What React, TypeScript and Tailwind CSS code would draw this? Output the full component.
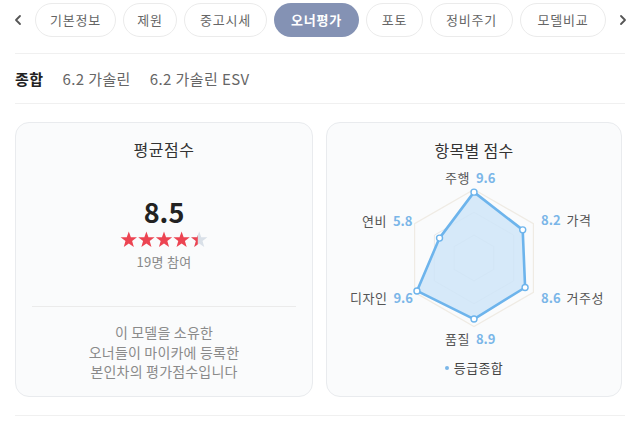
import React from "react";

const tabs = [
  { label: "기본정보", w: "w-[81px]" },
  { label: "제원", w: "w-[54px]" },
  { label: "중고시세", w: "w-[83px]" },
  { label: "오너평가", w: "w-[85px]", active: true },
  { label: "포토", w: "w-[57px]" },
  { label: "정비주기", w: "w-[83px]" },
  { label: "모델비교", w: "w-[86px]" },
];

const font = { fontFamily: '"Noto Sans CJK KR", "Noto Sans", sans-serif' };

function Chevron({ dir }: { dir: "left" | "right" }) {
  return (
    <svg width="10" height="12" viewBox="0 0 10 12">
      {dir === "left" ? (
        <polyline points="7,2 3,6 7,10" fill="none" stroke="#555" strokeWidth="1.8" strokeLinecap="round" strokeLinejoin="round" />
      ) : (
        <polyline points="3,2 7,6 3,10" fill="none" stroke="#555" strokeWidth="1.8" strokeLinecap="round" strokeLinejoin="round" />
      )}
    </svg>
  );
}

function starPath(cx: number, cy: number, ro: number, ri: number) {
  const pts: string[] = [];
  for (let i = 0; i < 10; i++) {
    const a = (-90 + i * 36) * (Math.PI / 180);
    const r = i % 2 === 0 ? ro : ri;
    pts.push(`${(cx + r * Math.cos(a)).toFixed(2)},${(cy + r * Math.sin(a)).toFixed(2)}`);
  }
  return pts.join(" ");
}

function Stars() {
  const size = 17.6;
  return (
    <svg width="88" height="17" viewBox="0 0 88 17">
      <defs>
        <clipPath id="half">
          <rect x={4 * size} y="0" width={size * 0.42} height="17" />
        </clipPath>
      </defs>
      {[0, 1, 2, 3].map((i) => (
        <polygon key={i} points={starPath(i * size + size / 2, 9, 8.6, 3.5)} fill="#ec4452" />
      ))}
      <polygon points={starPath(4 * size + size / 2, 9, 8.6, 3.5)} fill="#d9e0e8" />
      <polygon points={starPath(4 * size + size / 2, 9, 8.6, 3.5)} fill="#ec4452" clipPath="url(#half)" />
    </svg>
  );
}

function Radar() {
  const cx = 148;
  const cy = 90;
  const R = 68.6;
  const angles = [-90, -30, 30, 90, 150, 210];
  const values = [9.6, 8.2, 8.6, 8.9, 9.6, 5.8];
  const pt = (a: number, r: number) => {
    const rad = (a * Math.PI) / 180;
    return [cx + r * Math.cos(rad), cy + r * Math.sin(rad)];
  };
  const hex = (f: number) => angles.map((a) => pt(a, R * f).map((v) => v.toFixed(1)).join(",")).join(" ");
  const dataPts = angles.map((a, i) => pt(a, (R * values[i]) / 10));
  return (
    <svg className="absolute left-0 top-0" width="296" height="180" viewBox="0 0 296 180">
      <polygon points={hex(1)} fill="none" stroke="#efebe4" strokeWidth="1.2" />
      <polygon points={hex(2 / 3)} fill="none" stroke="#e8e8e8" strokeWidth="1" />
      <polygon points={hex(1 / 3)} fill="none" stroke="#e6e6e6" strokeWidth="1" />
      <polygon
        points={dataPts.map((p) => p.map((v) => v.toFixed(1)).join(",")).join(" ")}
        fill="#cfe5f8"
        fillOpacity="0.85"
        stroke="#6db4ec"
        strokeWidth="2.6"
        strokeLinejoin="round"
      />
      {dataPts.map((p, i) => (
        <circle key={i} cx={p[0]} cy={p[1]} r="3" fill="#fff" stroke="#6db4ec" strokeWidth="1.4" />
      ))}
    </svg>
  );
}

function Label({ name, value, left, top, valueFirst }: { name: string; value: string; left: string; top: string; valueFirst?: boolean }) {
  return (
    <div className={`absolute flex items-center gap-[6px] h-[18px] text-[13px] leading-[18px] ${left} ${top}`}>
      {valueFirst ? (
        <>
          <span className="font-semibold text-[#7ab6e8]">{value}</span>
          <span className="text-[#555] tracking-[0.5px]">{name}</span>
        </>
      ) : (
        <>
          <span className="text-[#555] tracking-[0.5px]">{name}</span>
          <span className="font-semibold text-[#7ab6e8]">{value}</span>
        </>
      )}
    </div>
  );
}

export default function App() {
  return (
    <div className="w-[640px] h-[427px] overflow-hidden bg-white" style={font}>
      <div className="mx-[15px] border-b border-[#f0f0f0] pt-[3px] pb-[16px]">
        <div className="flex items-center h-[34px] -ml-[15px] -mr-[15px]">
          <div className="w-[35px] flex justify-center">
            <Chevron dir="left" />
          </div>
          <div className="flex gap-[7px]">
            {tabs.map((t) => (
              <div
                key={t.label}
                className={`${t.w} h-[34px] rounded-full flex items-center justify-center text-[13px] tracking-[0.8px] ${
                  t.active ? "bg-[#8492b4] text-white font-bold" : "border border-[#ebebeb] text-[#666]"
                }`}
              >
                {t.label}
              </div>
            ))}
          </div>
          <div className="flex-1 flex justify-center">
            <Chevron dir="right" />
          </div>
        </div>
      </div>

      <div className="mx-[15px] h-[50px] border-b border-[#f0f0f0] flex items-center gap-[19px] text-[15px] leading-[20px] tracking-[0.4px]">
        <span className="font-bold text-[#222]">종합</span>
        <span className="text-[#666]">6.2 가솔린</span>
        <span className="text-[#666]">6.2 가솔린 ESV</span>
      </div>

      <div className="ml-[15px] mt-[18px] grid grid-cols-[298px_296px] gap-[13px]">
        <div className="h-[275px] rounded-[14px] border border-[#e9ebee] bg-[#fafbfc] flex flex-col items-center">
          <div className="mt-[15px] text-[16px] leading-[22px] text-[#333] tracking-[0.5px]">평균점수</div>
          <div className="mt-[36px] text-[27px] leading-[32px] font-bold text-[#222]">8.5</div>
          <div className="mt-[2px] h-[18px] flex items-center">
            <Stars />
          </div>
          <div className="mt-[5px] text-[13px] leading-[18px] text-[#888] tracking-[0.3px]">19명 참여</div>
          <div className="mt-[35px] w-[264px] border-t border-[#ebebeb]" />
          <div className="mt-[16px] text-[14px] leading-[19.5px] text-[#8a8a8a] text-center tracking-[0.2px]">
            <div>이 모델을 소유한</div>
            <div>오너들이 마이카에 등록한</div>
            <div>본인차의 평가점수입니다</div>
          </div>
        </div>

        <div className="h-[275px] rounded-[14px] border border-[#e9ebee] bg-[#fafbfc] flex flex-col items-center">
          <div className="mt-[16px] text-[16px] leading-[22px] text-[#333] tracking-[0.3px]">항목별 점수</div>
          <div className="relative w-[296px] h-[180px] mt-[7px]">
            <Radar />
            <Label name="주행" value="9.6" left="left-[119px]" top="top-[1px]" />
            <Label name="연비" value="5.8" left="left-[36px]" top="top-[44px]" />
            <Label name="가격" value="8.2" left="left-[215px]" top="top-[43px]" valueFirst />
            <Label name="디자인" value="9.6" left="left-[24px]" top="top-[121px]" />
            <Label name="거주성" value="8.6" left="left-[215px]" top="top-[121px]" valueFirst />
            <Label name="품질" value="8.9" left="left-[119px]" top="top-[162px]" />
          </div>
          <div className="mt-[11px] flex items-center gap-[5px] text-[13px] leading-[18px] text-[#444] tracking-[0.4px]">
            <span className="w-[4px] h-[4px] rounded-full bg-[#7ab6e8]" />
            <span>등급종합</span>
          </div>
        </div>
      </div>

      <div className="mx-[15px] mt-[18px] border-t border-[#f0f0f0]" />
    </div>
  );
}
